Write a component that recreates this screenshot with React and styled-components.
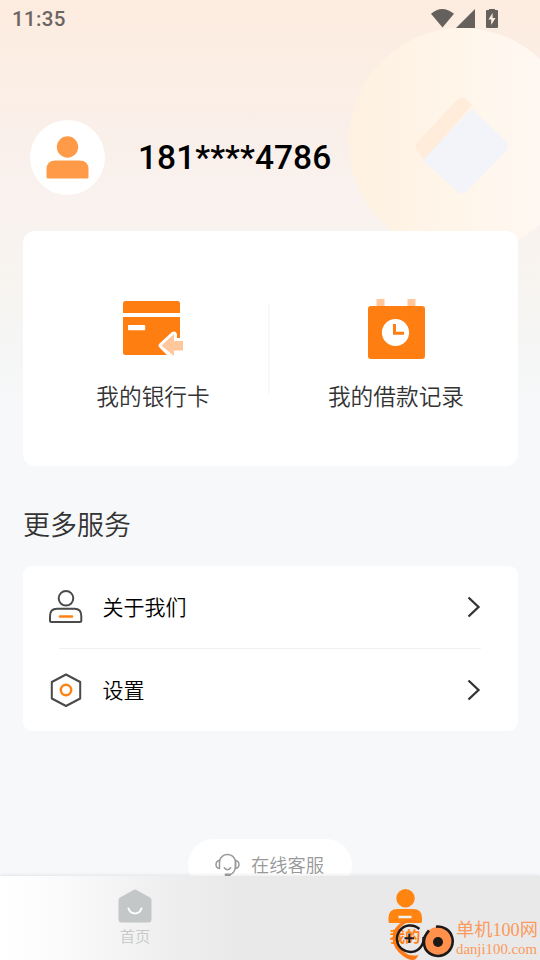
import React from 'react';
import styled, { createGlobalStyle } from 'styled-components'

const GlobalStyle = createGlobalStyle`
* {
  box-sizing: border-box;
}
body {
  margin: 0;
  font-family: Roboto, "Noto Sans CJK SC", sans-serif;
}
svg {
  display: block;
}
`

const Screen = styled.div`
position: relative;
width: 540px;
height: 960px;
overflow: hidden;
display: flex;
flex-direction: column;
font-weight: 350;
background: linear-gradient(
180deg,
#fdece0 0px,
#fbeee4 70px,
#faefe9 125px,
#f9f2ee 200px,
#f8f4f0 270px,
#f5f6f5 350px,
#f6f8f9 400px,
#f7f8fa 420px
);
`

const Decoration = styled.svg`
  position: absolute;
  top: 0;
  right: 0;
`

const StatusBar = styled.div`
position: relative;
display: flex;
justify-content: space-between;
align-items: center;
height: 37px;
padding: 0 41px 0 12px;
`

const Time = styled.span`
  color: #6b6561;
  font-size: 20.5px;
  font-weight: 500;
  letter-spacing: 0.35px;
`

const Profile = styled.div`
position: relative;
display: flex;
align-items: center;
height: 75px;
margin: 83px 0 36px 30px;
`

const Avatar = styled.div`
  display: flex;
  justify-content: center;
  align-items: center;
  width: 75px;
  height: 75px;
  border-radius: 50%;
  background: #fff;
`

const Phone = styled.span`
  margin-left: 33px;
  margin-top: -1px;
  color: #000;
  font-size: 33.5px;
  font-weight: 500;
  letter-spacing: 0.05px;
`

const Shortcuts = styled.div`
position: relative;
display: flex;
align-items: flex-start;
height: 235px;
margin: 0 22.5px;
padding-top: 67px;
border-radius: 12px;
background: #fff;
`

const Shortcut = styled.div`
  display: flex;
  flex-direction: column;
  align-items: center;
  width: ${props => props.$width};
  padding-left: ${props => props.$shift};
`

const ShortcutLabel = styled.span`
  margin-top: 22px;
  color: #333;
  font-size: 22.7px;
  line-height: 34px;
`

const Separator = styled.div`
  width: 2px;
  height: 90px;
  margin-top: 6px;
  background: #f8f9fa;
`

const Title = styled.h2`
  margin: 39px 0 20px 23px;
  color: #333;
  font-size: 27px;
  font-weight: 350;
  line-height: 42px;
  height: 41px;
`

const Menu = styled.div`
display: flex;
flex-direction: column;
height: 165px;
margin: 0 22.5px;
border-radius: 9px;
background: #fff;
`

const MenuItem = styled.div`
  display: flex;
  align-items: center;
  height: 82px;
  padding: 0 36.5px 0 26.5px;
`

const MenuText = styled.span`
  flex: 1;
  margin-left: 19.5px;
  padding-bottom: 2px;
  color: #000;
  font-size: 21px;
`

const MenuLine = styled.div`
  height: 1px;
  margin: 0 37px 0 36px;
  background: #f1f1f1;
`

const Support = styled.div`
display: flex;
align-items: center;
align-self: center;
width: 164px;
height: 52px;
margin-top: 108px;
padding-left: 27px;
border-radius: 26px;
background: #fff;
color: #999;
font-size: 18.3px;
`

const SupportText = styled.span`
  margin-left: 11px;
  padding-bottom: 2px;
`

/* fixed over the end of the page content */
const TabBar = styled.div`
position: absolute;
left: 0;
bottom: 0;
display: flex;
width: 100%;
height: 84px;
background: linear-gradient(
90deg,
#fff 0%,
#fdfdfd 7%,
#f7f7f7 17%,
#efefef 30%,
#e9e9e9 44%,
#e9e9e9 100%
);
box-shadow: 0 -1px 3px rgba(120,130,140,0.16);
`

const Tab = styled.div`
  display: flex;
  flex-direction: column;
  align-items: center;
  width: 50%;
  padding-top: 13px;
  color: ${props => props.$active ? '#ff8213' : '#c7c9ca'};
  font-size: 15.3px;
  font-weight: ${props => props.$active ? 700 : 350};
`

const TabText = styled.span`
  margin-top: 2.5px;
  line-height: 23px;
`

const Watermark = styled.div`
position: absolute;
right: 2px;
bottom: 0;
display: flex;
align-items: flex-start;
height: 42px;
color: #fb9a5c;
font-family: "Liberation Serif", "Noto Sans CJK SC", serif;
font-weight: 400;
`

const WatermarkText = styled.div`
display: flex;
flex-direction: column;
width: 82px;
margin-left: 1px;
padding-top: 2px;
white-space: nowrap;
`

const SiteName = styled.span`
  font-size: 18.2px;
  line-height: 21px;
`

const SiteUrl = styled.span`
  font-size: 14.8px;
  line-height: 17px;
`

const StatusIcons = () => (
  <svg width="68" height="20" viewBox="431 8 68 20" fill="#66605c">
    <path d="M431 12.8Q442 3.2 454 12.8L442.5 26.6Z" />
    <path d="M475 8V27H456Z" />
    <path fillRule="evenodd" d="M487 9h2V7.5h6V9h2q1 0 1 1v16q0 1-1 1h-10q-1 0-1-1V10q0-1 1-1ZM492.6 12L488.5 18.5h2.7v5.5L495.5 17h-2.9Z" />
  </svg>
)

const ChevronIcon = () => (
  <svg width="14" height="22" viewBox="0 0 14 22" fill="none" stroke="#333" strokeWidth="2.3">
    <path d="M1.5 1.5L11.5 11L1.5 20.5" />
  </svg>
)

const UserIcon = () => (
  <svg width="43" height="43" viewBox="0 0 43 43" fill="#ff9b48">
    <circle cx="21.5" cy="11" r="10.7" />
    <path d="M.5 33.5Q.5 24.5 9.5 24.5H33.5Q42.5 24.5 42.5 33.5V41Q42.5 42.5 41 42.5H2Q.5 42.5 .5 41Z" />
  </svg>
)

const BankCardIcon = () => (
  <svg width="62" height="61" viewBox="122 298 62 61">
    <path d="M123 313V303.5Q123 301 125.5 301H177.5Q180 301 180 303.5V313Z" fill="#ff7e12" />
    <path d="M123 317H180V355H125.5Q123 355 123 352.5Z" fill="#ff7e12" />
    <rect x="128" y="325" width="17.2" height="5.2" rx=".8" fill="#fff" />
    <path d="M184 338H177V334Q175.5 330.5 172 332L159.5 343.5Q157.5 345.5 159.5 347.5L168 356H184Z" fill="#fff" />
    <path d="M161.5 345.5L174 334V341H183V350.5H174V356Z" fill="#ffc79b" />
  </svg>
)

const RecordIcon = () => (
  <svg width="58" height="61" viewBox="367 298 58 61">
    <path d="M376.5 299h8v8h-8ZM407.5 299h8v8h-8Z" fill="#ffc79b" />
    <rect x="368" y="306" width="57" height="53" rx="3" fill="#ff7e12" />
    <circle cx="395.5" cy="332.5" r="13.6" fill="#fff" />
    <path d="M394.5 324V333.3H404" fill="none" stroke="#ff7e12" strokeWidth="3" />
  </svg>
)

const AboutIcon = () => (
  <svg width="34" height="34" viewBox="49 590 34 34" fill="none" stroke="#4a4a4a" strokeWidth="2">
    <circle cx="66" cy="598.3" r="7.3" />
    <path d="M50 616Q50 608.8 57 608.8H74.5Q81.3 608.8 81.3 616V620.5Q81.3 622 79.8 622H51.5Q50 622 50 620.5Z" />
    <path d="M60 616.5H72" stroke="#ff8213" strokeWidth="2.6" strokeLinecap="round" />
  </svg>
)

const SettingsIcon = () => (
  <svg width="34" height="34" viewBox="49 673 34 34" fill="none" stroke="#4a4a4a" strokeWidth="2" strokeLinejoin="round">
    <path d="M66 674.5L80.2 682V698.5L66 706L51.8 698.5V682Z" />
    <circle cx="66" cy="690" r="5.2" stroke="#ff8213" strokeWidth="2.5" />
  </svg>
)

const HeadsetIcon = () => (
  <svg width="25" height="25" viewBox="0 0 25 25" fill="none" stroke="#999" strokeWidth="1.5" strokeLinecap="round">
    <path d="M4.5 8Q6.5 1.5 12.5 1.5T20.5 8V14Q19.5 20.5 14.5 21.8" />
    <path d="M4.5 7.5V15.5Q1 15 1 11.5T4.5 7.5ZM20.5 7.5V15.5Q24 15 24 11.5T20.5 7.5Z" />
    <path d="M9.3 14.8Q12.5 18.6 15.7 14.8" />
    <path d="M11 21.8H14.5" strokeWidth="2.8" />
  </svg>
)

const HomeIcon = () => (
  <svg width="34" height="34" viewBox="0 0 34 34">
    <path d="M15.5 1Q17 .2 18.5 1L32 8.5Q33.5 9.5 33.5 11V30.5Q33.5 33.5 30.5 33.5H3.5Q.5 33.5 .5 30.5V11Q.5 9.5 2 8.5Z" fill="#c3c7c8" />
    <path d="M10.5 19.5C13 26.2 21 26.2 23.5 19.5" fill="none" stroke="#fff" strokeWidth="2.1" strokeLinecap="round" />
  </svg>
)

const MineIcon = () => (
  <svg width="34" height="34" viewBox="0 0 34 34" fill="#ff8510">
    <circle cx="17.5" cy="9.2" r="9.2" />
    <path d="M.5 29Q.5 20 9.5 20H25Q34 20 34 29V32Q34 34.5 31.5 34.5H3Q.5 34.5 .5 32Z" />
    <path d="M10.5 28H23.5" stroke="#f2f2f2" strokeWidth="2.5" />
  </svg>
)

const WatermarkLogo = () => (
  <svg width="63" height="42" viewBox="392 918 63 42" fill="none">
    <path d="M418 923Q413 917 405 920.5Q393 926 392.5 938Q393 949 403 956Q411 962 416 959L418.500 955Q410 957 404 952Q396 945 396.500 937Q398 925 409 922Z" fill="#ff7a16" />
    <circle cx="410.3" cy="938.7" r="13.3" stroke="#1d1918" strokeWidth="2.5" strokeDasharray="74 9.6" transform="rotate(-8 410.3 938.7)" />
    <circle cx="438" cy="941" r="14" fill="#ff914c" />
    <path d="M436 926.700A14.700 14.700 0 1 1 425.500 949Q421 939 429 930.500" stroke="#1d1918" strokeWidth="2.6" />
    <circle cx="438" cy="942" r="5" fill="#1d1918" />
    <path d="M404.500 938.300H414M409.300 933.500V943" stroke="#1d1918" strokeWidth="2" />
  </svg>
)

class App extends React.Component {
  render(){
    return (
      <Screen>
        <GlobalStyle/>
        <Decoration width="200" height="260" viewBox="340 0 200 260">
          <defs>
            <linearGradient id="glow" x1="0" x2="1">
              <stop offset="0" stopColor="#fef1e1"/>
              <stop offset="0.45" stopColor="#fff5e9"/>
              <stop offset="0.85" stopColor="#fff8f2"/>
            </linearGradient>
          </defs>
          <circle cx="462" cy="141.5" r="113.5" fill="url(#glow)"/>
          <path d="M457.5 99.5Q462 95.500 466.500 99.500L472 105L424 161L417.500 151Q413.500 146.500 417.500 142Z" fill="#ffecdb"/>
          <path d="M471.5 108.500L506.500 142Q510 146 506.500 150.500L466.500 191.500Q462 195.500 457.500 191.500L423 160.500Z" fill="#f2f4f9"/>
        </Decoration>

        <StatusBar>
          <Time>11:35</Time>
          <StatusIcons/>
        </StatusBar>

        <Profile>
          <Avatar><UserIcon/></Avatar>
          <Phone>181****4786</Phone>
        </Profile>

        <Shortcuts>
          <Shortcut $width="245px" $shift="16px">
            <BankCardIcon/>
            <ShortcutLabel>我的银行卡</ShortcutLabel>
          </Shortcut>
          <Separator/>
          <Shortcut $width="248px" $shift="5px">
            <RecordIcon/>
            <ShortcutLabel>我的借款记录</ShortcutLabel>
          </Shortcut>
        </Shortcuts>

        <Title>更多服务</Title>
        <Menu>
          <MenuItem>
            <AboutIcon/>
            <MenuText>关于我们</MenuText>
            <ChevronIcon/>
          </MenuItem>
          <MenuLine/>
          <MenuItem>
            <SettingsIcon/>
            <MenuText>设置</MenuText>
            <ChevronIcon/>
          </MenuItem>
        </Menu>

        <Support>
          <HeadsetIcon/>
          <SupportText>在线客服</SupportText>
        </Support>

        <TabBar>
          <Tab>
            <HomeIcon/>
            <TabText>首页</TabText>
          </Tab>
          <Tab $active>
            <MineIcon/>
            <TabText>我的</TabText>
          </Tab>
        </TabBar>

        <Watermark>
          <WatermarkLogo/>
          <WatermarkText>
            <SiteName>单机100网</SiteName>
            <SiteUrl>danji100.com</SiteUrl>
          </WatermarkText>
        </Watermark>
      </Screen>
    );
  }
}

export default App;
